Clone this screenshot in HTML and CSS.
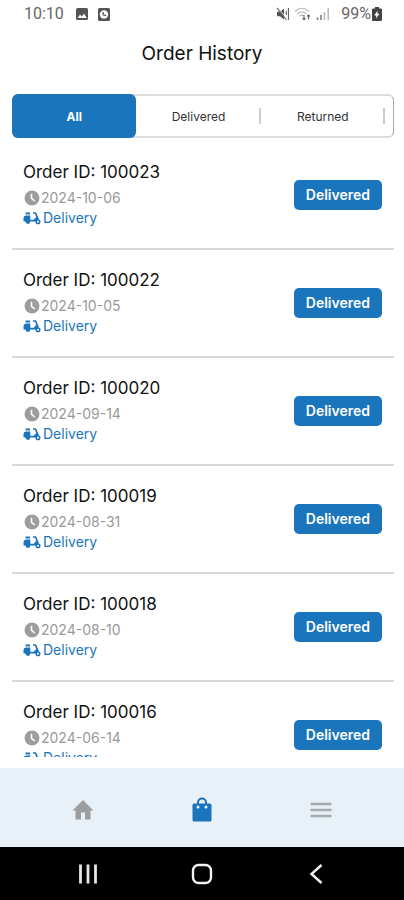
FILE: index.html
```html
<!DOCTYPE html>
<html lang="en">
<head>
<meta charset="utf-8">
<meta name="viewport" content="width=device-width, initial-scale=1">
<title>Order History</title>
<link rel="stylesheet" href="styles.css">
</head>
<body>
<svg class="sprite" aria-hidden="true">
  <symbol id="clock" viewBox="0 0 16 16">
    <circle cx="8" cy="8" r="7.5" fill="#9b9d9e"/>
    <path d="M7.500 3.800V8.300L10.800 11" fill="none" stroke="#fff" stroke-width="1.600"/>
  </symbol>
  <symbol id="scooter" viewBox="0 0 18 14">
    <path d="M2.500 1.500h4.500v2H2.500z" fill="#1b75bc"/>
    <path d="M.5 7.500q0-3 3-3h3.800v4.300h3.500L13.200 6 12 2.800H10V1.300h3l2.800 6.500-2 2.700H7.300a2.400 2.400 0 0 1-4.800 0H.5z" fill="#1b75bc"/>
    <circle cx="15" cy="10.800" r="1.800" fill="#fff" stroke="#1b75bc" stroke-width="1.500"/>
  </symbol>
</svg>
<div class="app">
  <div class="status">
    <span class="status-time">10:10</span>
    <svg class="status-photo" width="12" height="12" viewBox="0 0 12 12"><rect width="12" height="12" rx="1.5" fill="#555"/><path d="M1.5 10 4 6.5l1.800 2L8 5.500l2.800 4.500z" fill="#fff"/></svg>
    <svg class="status-alarm" width="12" height="13" viewBox="0 0 12 13"><rect width="12" height="13" rx="1.5" fill="#555"/><circle cx="6" cy="6.500" r="4.200" fill="#fff"/><path d="M5.200 4v2.800l3 .8" fill="none" stroke="#555" stroke-width="1.300"/></svg>
    <span class="status-right">
      <svg width="14" height="14" viewBox="0 0 14 14"><path d="M1 4.800h3L8 1.500v11L4 9.200H1z" fill="#555"/><path d="M2 .8l9 11.500" stroke="#fff" stroke-width="1"/><path d="M1 .8l9.500 12.200M12.500 1v12M10.300 4v4" fill="none" stroke="#666" stroke-width="1.200"/></svg>
      <svg width="18" height="14" viewBox="0 0 18 14"><path d="M1 4.500Q8-2 15 4.500M3.300 7Q8 3 12.500 7M5.500 9.400Q8 7 10.500 9.400" fill="none" stroke="#b5b5b5" stroke-width="1.100"/><path d="M10 8v4.500m-1.500-1.400 1.500 1.500 1.500-1.500M14.500 12.500V8M13 9.400 14.500 8 16 9.400" fill="none" stroke="#666" stroke-width="1.100"/></svg>
      <svg width="14" height="14" viewBox="0 0 14 14"><path d="M1.500 10.500v2.500M5 8v5" stroke="#777" stroke-width="1.500"/><path d="M8.500 5v8M12.200 1v12" stroke="#b5b5b5" stroke-width="1.400"/></svg>
      <span class="status-battery">99%</span>
      <svg width="10" height="14" viewBox="0 0 10 14"><path d="M3 0h4v1.500h2q1 0 1 1V13q0 1-1 1H1q-1 0-1-1V2.500q0-1 1-1h2z" fill="#444"/><path d="M5.500 3.500 2.300 8.400h2L4 11.500 7.500 6.800H5.400z" fill="#fff"/></svg>
    </span>
  </div>

  <header class="header"><h1>Order History</h1></header>

  <div class="tabs" role="tablist">
    <button class="tab tab-active" role="tab" aria-selected="true">All</button>
    <button class="tab" role="tab" aria-selected="false">Delivered</button>
    <button class="tab" role="tab" aria-selected="false">Returned</button>
  </div>

  <main class="orders">
    <article class="order">
      <div class="order-info">
        <h2>Order ID: 100023</h2>
        <p class="date"><svg><use href="#clock"/></svg>2024-10-06</p>
        <p class="kind"><svg><use href="#scooter"/></svg>Delivery</p>
      </div>
      <span class="badge">Delivered</span>
    </article>
    <article class="order">
      <div class="order-info">
        <h2>Order ID: 100022</h2>
        <p class="date"><svg><use href="#clock"/></svg>2024-10-05</p>
        <p class="kind"><svg><use href="#scooter"/></svg>Delivery</p>
      </div>
      <span class="badge">Delivered</span>
    </article>
    <article class="order">
      <div class="order-info">
        <h2>Order ID: 100020</h2>
        <p class="date"><svg><use href="#clock"/></svg>2024-09-14</p>
        <p class="kind"><svg><use href="#scooter"/></svg>Delivery</p>
      </div>
      <span class="badge">Delivered</span>
    </article>
    <article class="order">
      <div class="order-info">
        <h2>Order ID: 100019</h2>
        <p class="date"><svg><use href="#clock"/></svg>2024-08-31</p>
        <p class="kind"><svg><use href="#scooter"/></svg>Delivery</p>
      </div>
      <span class="badge">Delivered</span>
    </article>
    <article class="order">
      <div class="order-info">
        <h2>Order ID: 100018</h2>
        <p class="date"><svg><use href="#clock"/></svg>2024-08-10</p>
        <p class="kind"><svg><use href="#scooter"/></svg>Delivery</p>
      </div>
      <span class="badge">Delivered</span>
    </article>
    <article class="order">
      <div class="order-info">
        <h2>Order ID: 100016</h2>
        <p class="date"><svg><use href="#clock"/></svg>2024-06-14</p>
        <p class="kind"><svg><use href="#scooter"/></svg>Delivery</p>
      </div>
      <span class="badge">Delivered</span>
    </article>
  </main>

  <nav class="bottom-nav" aria-label="Main">
    <a href="#home" aria-label="Home"><svg width="24" height="24" viewBox="0 0 24 24"><path d="M10 21.500v-7h4v7h5.500V12.500h3L12 2 1.500 12.500h3v9z" fill="#9b9d9e"/></svg></a>
    <a href="#orders" aria-label="Orders" aria-current="page"><svg width="24" height="26" viewBox="0 0 24 26"><path d="M4 6.500h16q1.500 0 1.500 1.500v15q0 1.500-1.500 1.500H4q-1.500 0-1.500-1.500V8q0-1.500 1.500-1.500z" fill="#1b75bc"/><path d="M8 7V5.500a4 4 0 0 1 8 0V7" fill="none" stroke="#1b75bc" stroke-width="2"/><circle cx="8" cy="10" r="1.500" fill="#e8f0f8"/><circle cx="16" cy="10" r="1.500" fill="#e8f0f8"/></svg></a>
    <a href="#menu" aria-label="Menu"><svg width="24" height="24" viewBox="0 0 24 24"><path d="M1.500 6h21M1.500 12h21M1.500 18h21" stroke="#a6abad" stroke-width="2.400"/></svg></a>
  </nav>

  <div class="system-nav">
    <button aria-label="Recent apps"><svg width="20" height="20" viewBox="0 0 20 20"><path d="M2.500 .5v19M10 .5v19M17.500 .5v19" stroke="#e6e6e6" stroke-width="2.800"/></svg></button>
    <button aria-label="Home screen"><svg width="22" height="22" viewBox="0 0 22 22"><rect x="2" y="2" width="18" height="18" rx="5.500" fill="none" stroke="#f2f2f2" stroke-width="2.400"/></svg></button>
    <button aria-label="Back"><svg width="20" height="22" viewBox="0 0 20 22"><path d="M15.500 2 5.500 11l10 9" fill="none" stroke="#f2f2f2" stroke-width="2.400"/></svg></button>
  </div>
</div>
</body>
</html>
```
FILE: styles.css
```css
* {
  box-sizing: border-box;
}

body {
  margin: 0;
  background: #fff;
  color: #111;
  font-family: Inter, "Noto Sans", sans-serif;
}

h1, h2, p {
  margin: 0;
}

button {
  padding: 0;
  border: 0;
  background: none;
  font: inherit;
}

svg {
  flex: none;
}

.sprite {
  display: none;
}

.app {
  display: flex;
  flex-direction: column;
  height: 100vh;
}

.status {
  display: flex;
  align-items: center;
  height: 28px;
  padding: 0 22px 0 24px;
  color: #666;
  font: 16px/28px Roboto, sans-serif;
}

.status-photo {
  margin-left: 12px;
}

.status-alarm {
  margin-left: 10px;
}

.status-right {
  display: flex;
  align-items: center;
  gap: 4px;
  margin-left: auto;
}

.status-battery {
  margin: 0 -3px 0 7px;
}

.header {
  padding: 14px 0 28px;
  text-align: center;
}

h1 {
  font-size: 19px;
  font-weight: 400;
  line-height: 24px;
}

.tabs {
  display: grid;
  grid-template-columns: repeat(3, 1fr);
  flex: none;
  height: 44px;
  margin: 0 10px 0 12px;
  padding-right: 8px;
  border: solid #dcdcdc;
  border-width: 2px 1px 2px 0;
  border-right-color: #aaa;
  border-radius: 6px;
}

.tab {
  display: flex;
  align-items: center;
  justify-content: center;
  color: #333;
  font-size: 12px;
  position: relative;
}

.tab:not(.tab-active)::after {
  content: "";
  position: absolute;
  right: 0;
  width: 2px;
  height: 16px;
  background: #ccc;
}

.tab-active {
  margin: -2px 0;
  border-radius: 6px;
  background: #1b75bc;
  color: #fff;
  font-weight: 700;
}

.orders {
  flex: 1;
  min-height: 0;
  margin: 4px 10px 11px 12px;
  overflow: hidden;
}

.order {
  display: flex;
  align-items: center;
  justify-content: space-between;
  height: 108px;
  padding: 0 12px 0 11px;
  border-bottom: 2px solid #d9d9d9;
}

.order-info {
  padding-bottom: 2px;
}

h2 {
  margin-bottom: 4px;
  font-size: 17px;
  font-weight: 400;
  line-height: 24px;
}

.date,
.kind {
  display: flex;
  align-items: center;
  font-size: 14px;
  line-height: 20px;
}

.date {
  color: #999;
}

.kind {
  gap: 2px;
  color: #1b75bc;
}

.date svg,
.kind svg {
  width: 18px;
  height: 16px;
}

.kind svg {
  height: 14px;
}

.badge {
  padding: 0 12px;
  border-radius: 5px;
  background: #1b75bc;
  color: #fff;
  font-size: 14px;
  font-weight: 600;
  line-height: 30px;
}

.bottom-nav {
  display: flex;
  flex: none;
  align-items: center;
  justify-content: space-around;
  height: 79px;
  padding: 4px 24px 0;
  background: #e8f0f8;
}

.bottom-nav a {
  display: flex;
}

.system-nav {
  display: flex;
  flex: none;
  align-items: center;
  justify-content: space-around;
  height: 53px;
  padding: 0 32px;
  background: #000;
}

.system-nav button {
  display: flex;
}
```
